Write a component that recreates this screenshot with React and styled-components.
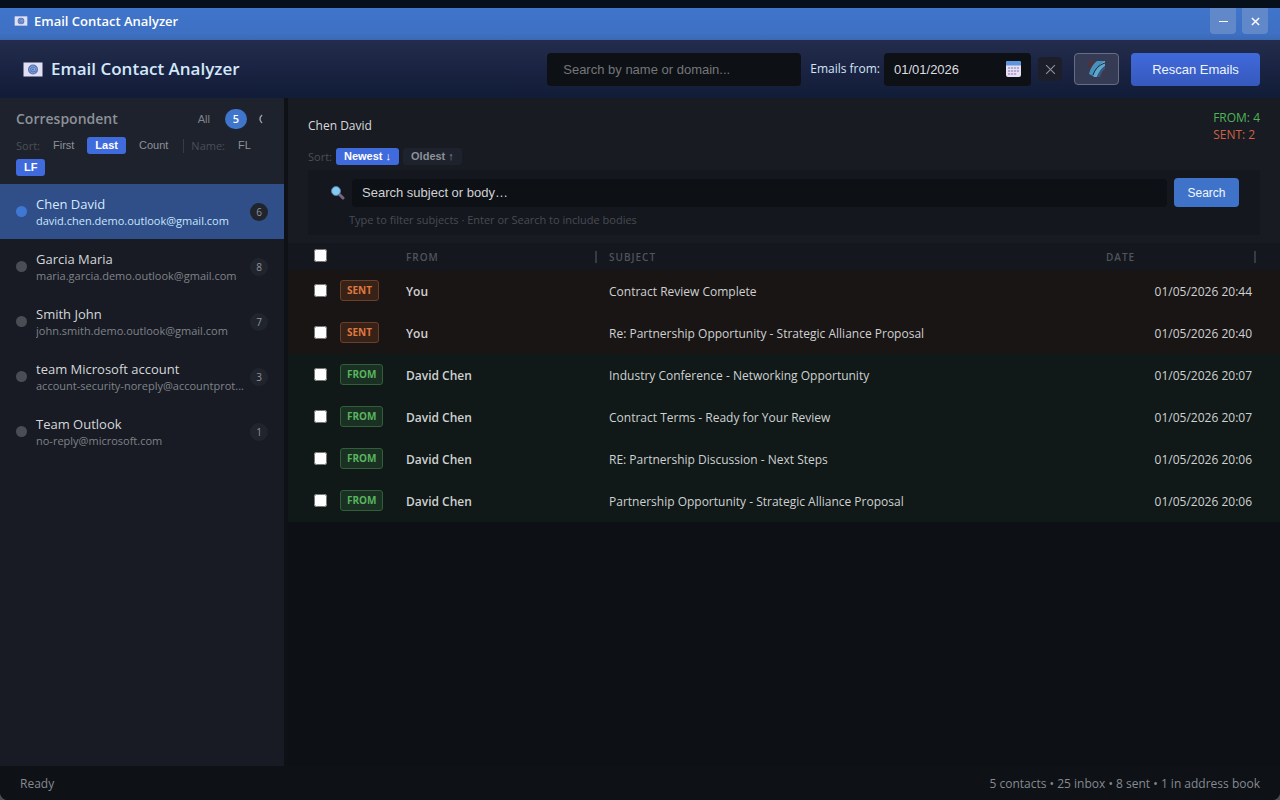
import React from "react";
import styled, { createGlobalStyle, css } from "styled-components";

const ui = `"Open Sans", "Noto Sans", sans-serif`;
const control = `"Liberation Sans", Arial, sans-serif`;

const GlobalStyle = createGlobalStyle`
  *, *::before, *::after { box-sizing: border-box; }
  html, body, #root { height: 100%; }
  body { margin: 0; background: #4a4c50; color: #d8dbe0; font: 12px/16px ${ui}; }
  button, input { font-family: ${control}; margin: 0; }
  h1, h2, h3, p, ul { margin: 0; padding: 0; }
`;

const Window = styled.div`
  display: flex;
  flex-direction: column;
  min-height: 100vh;
  overflow: hidden;
  border-radius: 0 0 8px 8px;
  background: #0d1014;
`;

const Shade = styled.div`
  height: 8px;
  background: #06101a;
`;

const TitleBar = styled.div`
  display: flex;
  align-items: flex-start;
  justify-content: space-between;
  height: 32px;
  padding: 0 12px 0 14px;
  background: linear-gradient(#3f75cb, #3e70c3 80%, #3b69b4);
`;

const AppName = styled.div`
  display: flex;
  align-items: center;
  gap: 6px;
  height: 26px;
  color: #fff;
  font-size: 13px;
  font-weight: 600;
`;

const WindowButtons = styled.div`
  display: flex;
  gap: 6px;
`;

const WindowButton = styled.button`
  display: grid;
  place-items: center;
  width: 26px;
  height: 26px;
  padding: 0;
  border: 0;
  border-radius: 0 0 4px 4px;
  background: #6189ca;
  color: #fff;
`;

const Header = styled.header`
  display: flex;
  align-items: center;
  justify-content: space-between;
  height: 58px;
  padding: 0 20px 0 23px;
  background: linear-gradient(#232c4c, #111c38);
`;

const Brand = styled.div`
  display: flex;
  align-items: center;
  gap: 8px;
`;

const BrandTitle = styled.h1`
  color: #d3e8fb;
  font-size: 17px;
  line-height: 24px;
  font-weight: 600;
`;

const Tools = styled.div`
  display: flex;
  align-items: center;
`;

const ContactSearch = styled.input`
  width: 254px;
  height: 33px;
  padding: 0 16px;
  border: 0;
  border-radius: 4px;
  background: #0d1014;
  color: #d8dbe0;
  font-size: 13px;
  &::placeholder { color: #74777b; opacity: 1; }
`;

const DateLabel = styled.label`
  margin-left: 9px;
  color: #d3e4f6;
  font-size: 12px;
`;

const DateBox = styled.div`
  display: flex;
  align-items: center;
  width: 147px;
  height: 33px;
  margin-left: 4px;
  padding: 0 10px;
  border-radius: 4px;
  background: #0d1014;
`;

const DateInput = styled.input`
  flex: 1;
  min-width: 0;
  padding: 0;
  border: 0;
  background: none;
  color: #dcdde0;
  font-size: 13px;
`;

const ClearButton = styled.button`
  display: grid;
  place-items: center;
  width: 24px;
  height: 24px;
  margin-left: 7px;
  padding: 0;
  border: 0;
  border-radius: 4px;
  background: #1c1f29;
  color: #8d9199;
`;

const ThemeButton = styled.button`
  display: grid;
  place-items: center;
  width: 45px;
  height: 32px;
  margin-left: 12px;
  padding: 0;
  border: 1px solid #666d83;
  border-radius: 4px;
  background: #353b54;
`;

const RescanButton = styled.button`
  width: 129px;
  height: 33px;
  margin-left: 12px;
  border: 0;
  border-radius: 4px;
  background: linear-gradient(#4069db, #3659bd);
  color: #eef4ff;
  font-size: 13px;
`;

const Main = styled.div`
  display: flex;
  flex: 1;
`;

const Sidebar = styled.aside`
  width: 284px;
  flex: none;
  background: #181b23;
`;

const SideHead = styled.div`
  height: 86px;
  padding: 10px 16px 0;
  background: #1e222c;
`;

const SideTitleRow = styled.div`
  display: flex;
  align-items: center;
  height: 22px;
`;

const SideTitle = styled.h2`
  flex: 1;
  color: #8d9198;
  font-size: 14px;
  font-weight: 600;
`;

const AllButton = styled.button`
  padding: 0;
  border: 0;
  background: none;
  color: #7f838a;
  font-size: 11px;
`;

const Total = styled.span`
  width: 22px;
  height: 20px;
  margin-left: 15px;
  border-radius: 10px;
  background: #3f75cb;
  color: #fff;
  font-size: 11px;
  font-weight: 600;
  line-height: 20px;
  text-align: center;
`;

const CollapseButton = styled.button`
  display: flex;
  margin-left: 11px;
  margin-right: 4px;
  padding: 0;
  border: 0;
  background: none;
  color: #9a9ea5;
`;

const SortRow = styled.div`
  display: flex;
  flex-wrap: wrap;
  align-items: center;
  row-gap: 5px;
  margin-top: 7px;
`;

const Muted = styled.span`
  color: #4b4f58;
  font-size: 11px;
`;

const Chip = styled.button`
  height: 17px;
  padding: 0 8px;
  border: 0;
  border-radius: 3px;
  background: ${(p) => (p.$on ? "#406bdc" : p.$filled ? "#1e222c" : "none")};
  color: ${(p) => (p.$on ? "#fff" : "#8d9199")};
  font-size: 11px;
  font-weight: ${(p) => (p.$on || p.$bold ? 700 : 400)};
  line-height: 17px;
  white-space: nowrap;
`;

const Group = styled.div`
  display: flex;
  align-items: center;
  gap: ${(p) => (p.$tight ? 4 : 5)}px;
`;

const Divider = styled.span`
  width: 1px;
  height: 14px;
  margin: 0 7px;
  background: #373b44;
`;

const ContactList = styled.ul`
  list-style: none;
`;

const Contact = styled.li`
  display: flex;
  align-items: center;
  height: 55px;
  padding: 0 16px;
  background: ${(p) => (p.$active ? "#304e88" : "none")};
`;

const Dot = styled.span`
  width: 11px;
  height: 11px;
  flex: none;
  border-radius: 50%;
  background: ${(p) => (p.$active ? "#3f78d3" : "#4b4d55")};
`;

const ContactText = styled.div`
  flex: 1;
  min-width: 0;
  margin: 0 4px 0 9px;
`;

const ContactName = styled.div`
  color: ${(p) => (p.$active ? "#d5e9ff" : "#d5d7da")};
  font-size: 13px;
  line-height: 18px;
`;

const ContactMail = styled.div`
  overflow: hidden;
  color: ${(p) => (p.$active ? "#c9e6ff" : "#7f838a")};
  font-size: 11px;
  line-height: 15px;
  text-overflow: ellipsis;
  white-space: nowrap;
`;

const Count = styled.span`
  width: 18px;
  height: 18px;
  flex: none;
  border-radius: 9px;
  background: #20242c;
  color: #90949b;
  font-size: 10px;
  line-height: 18px;
  text-align: center;
`;

const Gutter = styled.div`
  width: 4px;
  flex: none;
  background: #0e1116;
`;

const Content = styled.main`
  flex: 1;
  min-width: 0;
  background: #0d1014;
`;

const Top = styled.div`
  padding: 11px 20px 8px;
  background: #181b21;
`;

const Summary = styled.div`
  display: flex;
  justify-content: space-between;
  height: 39px;
`;

const Person = styled.h2`
  padding-top: 9px;
  color: #d8dadd;
  font-size: 12px;
  font-weight: 400;
`;

const Totals = styled.div`
  font-size: 12px;
  line-height: 17px;
`;

const Stat = styled.div`
  color: ${(p) => (p.$sent ? "#cf6245" : "#4fb458")};
`;

const SearchPanel = styled.form`
  margin-top: 5px;
  padding: 8px 21px 7px 22px;
  background: #14171e;
`;

const SearchLine = styled.div`
  display: flex;
  align-items: center;
  gap: 7px;
`;

const BodySearch = styled.input`
  flex: 1;
  min-width: 0;
  height: 28px;
  padding: 0 10px;
  border: 0;
  border-radius: 4px;
  background: #0d1014;
  color: #d8dbe0;
  font-size: 13px;
  &::placeholder { color: #d0d2d5; opacity: 1; }
`;

const SearchButton = styled.button`
  width: 65px;
  height: 29px;
  border: 0;
  border-radius: 4px;
  background: #3f73c9;
  color: #f2f7ff;
  font-size: 12px;
`;

const Hint = styled.p`
  padding: 5px 0 0 19px;
  color: #484b52;
  font-size: 11px;
`;

const MailTable = styled.table`
  width: 100%;
  table-layout: fixed;
  border-collapse: collapse;
`;

const HeadCell = styled.th`
  height: 27px;
  padding: 0 ${(p) => (p.$last ? 24 : 4)}px 0 8px;
  background: #14171e;
  color: #50545c;
  font-size: 10px;
  font-weight: 600;
  letter-spacing: 1px;
  text-align: left;
`;

const HeadInner = styled.span`
  display: flex;
  align-items: center;
  justify-content: space-between;
`;

const Resizer = styled.i`
  width: 2px;
  height: 12px;
  background: #373b43;
`;

const MailRow = styled.tr`
  height: 42px;
  background: ${(p) => (p.$sent ? "#191514" : "#101917")};
`;

const Cell = styled.td`
  padding: 1px 8px 0;
  overflow: hidden;
  color: #cfd1d3;
  font-size: 12px;
  font-weight: ${(p) => (p.$strong ? 600 : 400)};
  white-space: nowrap;
`;

const tickCell = css`
  padding: 0 0 2px 26px;
  text-align: left;
`;
const TickHead = styled(HeadCell)`${tickCell}`;
const TickCell = styled(Cell)`${tickCell}`;
const TagCell = styled(Cell)`padding: 0 4px 2px;`;
const DateCell = styled(Cell)`
  padding-right: 28px;
  text-align: right;
`;

const Tick = styled.input`
  display: block;
  width: 13px;
  height: 13px;
`;

const Tag = styled.span`
  display: block;
  width: max-content;
  height: 21px;
  padding: 0 6px;
  border: 1px solid ${(p) => (p.$sent ? "#6b4029" : "#315f39")};
  border-radius: 3px;
  background: ${(p) => (p.$sent ? "#382117" : "#1a3022")};
  color: ${(p) => (p.$sent ? "#de7940" : "#58b45f")};
  font-size: 10px;
  font-weight: 700;
  line-height: 19px;
`;

const Footer = styled.footer`
  display: flex;
  align-items: center;
  justify-content: space-between;
  height: 34px;
  padding: 2px 20px 0;
  background: #0e1116;
  color: #858a91;
  font-size: 12px;
`;

const MailIcon = ({ width, height }) => (
  <svg width={width} height={height} viewBox="0 0 20 15" aria-hidden="true">
    <rect x=".5" y=".5" width="19" height="14" fill="#e1dff3" />
    <circle cx="10" cy="7.5" r="5" fill="#5375ba" />
    <path d="M12.400 10a3.400 3.400 0 1 1 1-2.500c0 1.600-1.900 1.500-1.900 0V6M11.500 7.500a1.500 1.500 0 1 1-3 0a1.500 1.500 0 0 1 3 0" fill="none" stroke="#a5b5e0" strokeWidth=".7" />
  </svg>
);

const CalendarIcon = () => (
  <svg width="15" height="16" viewBox="0 0 15 16" aria-hidden="true">
    <rect width="15" height="16" rx="2" fill="#e7e0f4" />
    <path d="M0 4.500V2a2 2 0 0 1 2-2h11a2 2 0 0 1 2 2v2.500z" fill="#5b96df" />
    <path d="M2 6h2.200v2H2zM5 6h2.200v2H5zM8 6h2.200v2H8zM11 6h2v2h-2zM2 9h2.200v2H2zM5 9h2.200v2H5zM8 9h2.200v2H8zM11 9h2v2h-2zM2 12h2.200v2H2zM5 12h2.200v2H5zM8 12h2.200v2H8z" fill="#b5abcf" />
  </svg>
);

const Cross = ({ size, weight = 1 }) => (
  <svg width={size} height={size} viewBox="0 0 10 10" stroke="currentColor" strokeWidth={weight} aria-hidden="true">
    <path d="M1 1l8 8M9 1L1 9" />
  </svg>
);

const BrushIcon = () => (
  <svg width="18" height="18" viewBox="0 0 18 18" aria-hidden="true">
    <path d="M0 1h8L1 11z" fill="#4b3440" />
    <path d="M17 8v8l-4 1z" fill="#453745" />
    <path d="M1 14C2 9 5 4 9 1h7C11 4 7 9 5 16z" fill="#4593bd" />
    <path d="M5 16C7 10 11 4 16 1h1v5c-4 3-6 6-8 11H6z" fill="#5fa6cd" />
    <path d="M9 17c2-5 4-8 8-11v3c-3 2-4 5-5 8z" fill="#34597f" />
    <path d="M5 15C7 9 11 5 17 3" fill="none" stroke="#1e2c43" />
  </svg>
);

const LensIcon = () => (
  <svg width="15" height="15" viewBox="0 0 15 15" aria-hidden="true">
    <path d="M9 9l4 4" stroke="#78647f" strokeWidth="3" strokeLinecap="round" />
    <circle cx="6" cy="6" r="4.500" fill="#83c9f0" stroke="#527ca0" />
  </svg>
);

const contacts = [
  ["Chen David", "david.chen.demo.outlook@gmail.com", 6],
  ["Garcia Maria", "maria.garcia.demo.outlook@gmail.com", 8],
  ["Smith John", "john.smith.demo.outlook@gmail.com", 7],
  ["team Microsoft account", "account-security-noreply@accountprot...", 3],
  ["Team Outlook", "no-reply@microsoft.com", 1],
];

const mails = [
  ["SENT", "You", "Contract Review Complete", "01/05/2026 20:44"],
  ["SENT", "You", "Re: Partnership Opportunity - Strategic Alliance Proposal", "01/05/2026 20:40"],
  ["FROM", "David Chen", "Industry Conference - Networking Opportunity", "01/05/2026 20:07"],
  ["FROM", "David Chen", "Contract Terms - Ready for Your Review", "01/05/2026 20:07"],
  ["FROM", "David Chen", "RE: Partnership Discussion - Next Steps", "01/05/2026 20:06"],
  ["FROM", "David Chen", "Partnership Opportunity - Strategic Alliance Proposal", "01/05/2026 20:06"],
];

export default function App() {
  return (
    <Window>
      <GlobalStyle />
      <Shade />
      <TitleBar>
        <AppName><MailIcon width={14} height={10} />Email Contact Analyzer</AppName>
        <WindowButtons>
          <WindowButton aria-label="Minimize">
            <svg width="9" height="9" viewBox="0 0 9 9" aria-hidden="true"><path d="M0 4.500h9" stroke="currentColor" /></svg>
          </WindowButton>
          <WindowButton aria-label="Close"><Cross size={9} weight={1.6} /></WindowButton>
        </WindowButtons>
      </TitleBar>
      <Header>
        <Brand><MailIcon width={20} height={15} /><BrandTitle>Email Contact Analyzer</BrandTitle></Brand>
        <Tools>
          <ContactSearch type="search" aria-label="Search contacts" placeholder="Search by name or domain..." />
          <DateLabel htmlFor="since">Emails from:</DateLabel>
          <DateBox><DateInput id="since" defaultValue="01/01/2026" /><CalendarIcon /></DateBox>
          <ClearButton aria-label="Clear date"><Cross size={11} /></ClearButton>
          <ThemeButton aria-label="Theme"><BrushIcon /></ThemeButton>
          <RescanButton>Rescan Emails</RescanButton>
        </Tools>
      </Header>
      <Main>
        <Sidebar>
          <SideHead>
            <SideTitleRow>
              <SideTitle>Correspondent</SideTitle>
              <AllButton>All</AllButton>
              <Total>5</Total>
              <CollapseButton aria-label="Collapse">
                <svg width="6" height="10" viewBox="0 0 6 10" fill="none" stroke="currentColor" strokeWidth="1.400" aria-hidden="true"><path d="M4 1Q0 5 4 9" /></svg>
              </CollapseButton>
            </SideTitleRow>
            <SortRow>
              <Group><Muted>Sort:</Muted><Chip>First</Chip><Chip $on>Last</Chip><Chip>Count</Chip></Group>
              <Divider />
              <Group><Muted>Name:</Muted><Chip>FL</Chip></Group>
              <Chip $on>LF</Chip>
            </SortRow>
          </SideHead>
          <ContactList>
            {contacts.map(([name, mail, count], i) => (
              <Contact key={mail} $active={i === 0}>
                <Dot $active={i === 0} />
                <ContactText>
                  <ContactName $active={i === 0}>{name}</ContactName>
                  <ContactMail $active={i === 0}>{mail}</ContactMail>
                </ContactText>
                <Count>{count}</Count>
              </Contact>
            ))}
          </ContactList>
        </Sidebar>
        <Gutter />
        <Content>
          <Top>
            <Summary>
              <Person>Chen David</Person>
              <Totals><Stat>FROM: 4</Stat><Stat $sent>SENT: 2</Stat></Totals>
            </Summary>
            <Group $tight><Muted>Sort:</Muted><Chip $on>Newest ↓</Chip><Chip $filled $bold>Oldest ↑</Chip></Group>
            <SearchPanel onSubmit={(e) => e.preventDefault()}>
              <SearchLine>
                <LensIcon />
                <BodySearch aria-label="Search subject or body" placeholder="Search subject or body…" />
                <SearchButton>Search</SearchButton>
              </SearchLine>
              <Hint>Type to filter subjects · Enter or Search to include bodies</Hint>
            </SearchPanel>
          </Top>
          <MailTable>
            <colgroup>
              <col style={{ width: 48 }} />
              <col style={{ width: 62 }} />
              <col style={{ width: 203 }} />
              <col />
              <col style={{ width: 182 }} />
            </colgroup>
            <thead>
              <tr>
                <TickHead><Tick type="checkbox" aria-label="Select all" /></TickHead>
                <HeadCell />
                <HeadCell><HeadInner>FROM<Resizer /></HeadInner></HeadCell>
                <HeadCell>SUBJECT</HeadCell>
                <HeadCell $last><HeadInner>DATE<Resizer /></HeadInner></HeadCell>
              </tr>
            </thead>
            <tbody>
              {mails.map(([tag, who, subject, date]) => (
                <MailRow key={subject} $sent={tag === "SENT"}>
                  <TickCell><Tick type="checkbox" aria-label={subject} /></TickCell>
                  <TagCell><Tag $sent={tag === "SENT"}>{tag}</Tag></TagCell>
                  <Cell $strong>{who}</Cell>
                  <Cell>{subject}</Cell>
                  <DateCell>{date}</DateCell>
                </MailRow>
              ))}
            </tbody>
          </MailTable>
        </Content>
      </Main>
      <Footer><span>Ready</span><span>5 contacts • 25 inbox • 8 sent • 1 in address book</span></Footer>
    </Window>
  );
}
